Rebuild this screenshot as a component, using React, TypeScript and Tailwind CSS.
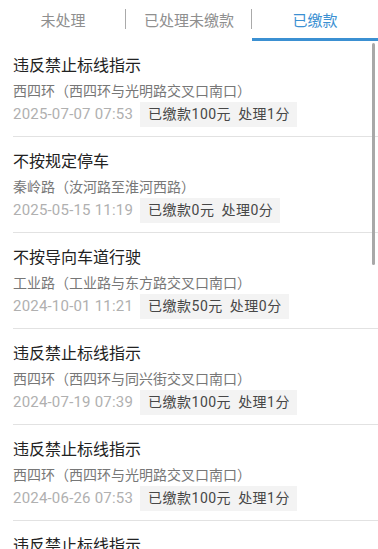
import React from "react";

const items = [
  { t: "违反禁止标线指示", a: "西四环（西四环与光明路交叉口南口）", d: "2025-07-07 07:53", b: "已缴款100元", p: "处理1分" },
  { t: "不按规定停车", a: "秦岭路（汝河路至淮河西路）", d: "2025-05-15 11:19", b: "已缴款0元", p: "处理0分" },
  { t: "不按导向车道行驶", a: "工业路（工业路与东方路交叉口南口）", d: "2024-10-01 11:21", b: "已缴款50元", p: "处理0分" },
  { t: "违反禁止标线指示", a: "西四环（西四环与同兴街交叉口南口）", d: "2024-07-19 07:39", b: "已缴款100元", p: "处理1分" },
  { t: "违反禁止标线指示", a: "西四环（西四环与光明路交叉口南口）", d: "2024-06-26 07:53", b: "已缴款100元", p: "处理1分" },
  { t: "违反禁止标线指示", a: "西四环（西四环与光明路交叉口南口）", d: "2024-06-26 07:53", b: "已缴款100元", p: "处理1分" },
];

export default function App() {
  return (
    <div
      className="relative w-[378px] h-[549px] overflow-hidden bg-white"
      style={{ fontFamily: '"Noto Sans CJK SC", "Noto Sans", sans-serif' }}
    >
      <div className="flex h-[41px]">
        <div className="flex-1 flex items-center justify-center text-[15px] text-[#8f8f8f] relative">
          未处理
          <span className="absolute right-0 top-[9px] h-[20px] w-px bg-[#aaa]" />
        </div>
        <div className="flex-1 flex items-center justify-center text-[15px] text-[#8f8f8f] relative">
          已处理未缴款
          <span className="absolute right-0 top-[9px] h-[20px] w-px bg-[#aaa]" />
        </div>
        <div className="flex-1 flex items-center justify-center text-[15px] text-[#3b90d2] border-b-[3px] border-[#3b90d2] pt-[3px]">
          已缴款
        </div>
      </div>
      <div className="flex flex-col">
        {items.map((it, i) => (
          <div key={i} className="pl-[13px]">
            <div className="h-[95px] pt-[12px] flex flex-col">
              <div className="text-[16px] leading-[22px] text-[#222]">{it.t}</div>
              <div className="mt-[5px] text-[14px] leading-[20px] text-[#777]">{it.a}</div>
              <div className="mt-[2px] flex items-center h-[25px]">
                <span
                  className="text-[15px] text-[#b0b0b0] tracking-[0.2px]"
                  style={{ fontFamily: 'Roboto, "Noto Sans CJK SC", sans-serif' }}
                >
                  {it.d}
                </span>
                <span
                  className="ml-[7px] h-[25px] flex items-center pl-[8px] pr-[7px] bg-[#f3f3f3] text-[14px] text-[#474747] tracking-[0.5px]"
                  style={{ fontFamily: 'Roboto, "Noto Sans CJK SC", sans-serif' }}
                >
                  {it.b}
                  <span className="ml-[7px]">{it.p}</span>
                </span>
              </div>
            </div>
            <div className="h-px bg-[#e2e2e2]" />
          </div>
        ))}
      </div>
      <div className="absolute left-[372px] top-[43px] w-[3px] h-[222px] bg-[#a8a8a8] rounded-sm" />
    </div>
  );
}
